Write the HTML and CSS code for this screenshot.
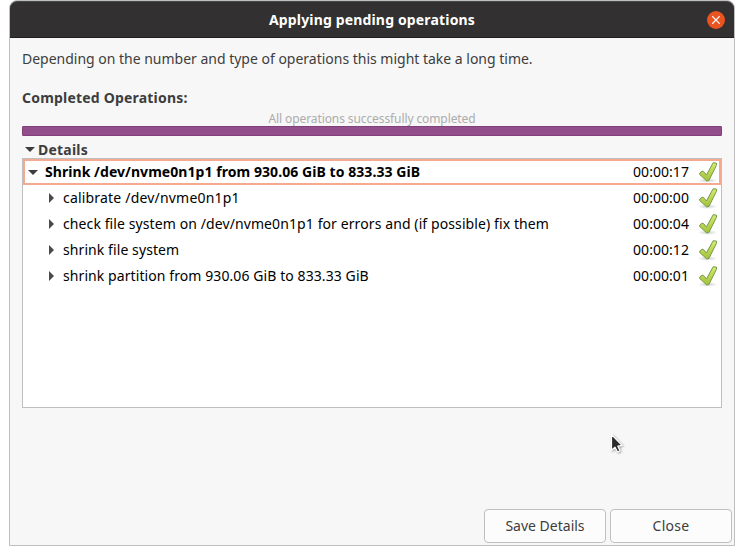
FILE: index.html
```html
<!DOCTYPE html>
<html lang="en">
<head>
<meta charset="utf-8">
<title>Applying pending operations</title>
<link rel="stylesheet" href="styles.css">
</head>
<body>
<svg class="defs" aria-hidden="true">
  <defs>
    <linearGradient id="green" x1="0" y1="0" x2="0" y2="1"><stop offset="0" stop-color="#d9ea70"/><stop offset="1" stop-color="#a3c038"/></linearGradient>
    <radialGradient id="shade"><stop offset="0" stop-color="#000" stop-opacity=".2"/><stop offset="1" stop-color="#000" stop-opacity="0"/></radialGradient>
    <symbol id="check" viewBox="0 0 22 22">
      <ellipse cx="9.5" cy="19.5" rx="10" ry="2.5" fill="url(#shade)"/>
      <path d="M15.2 1.7 L18.6 2.2 L18.4 4.4 L11 19.3 L8.8 20 L1.7 13.5 L1.8 12 L4 10.2 L5.4 10.4 L8.4 14 Z" fill="url(#green)" stroke="#6f9d4a" stroke-width="1" stroke-linejoin="round"/>
    </symbol>
  </defs>
</svg>
<main class="window">
  <header class="titlebar">
    <h1>Applying pending operations</h1>
    <button class="window-close" aria-label="Close window"><svg viewBox="0 0 18 18" width="18" height="18"><path d="M5.7 5.7l6.6 6.6M12.3 5.7l-6.6 6.6" stroke="#fff" stroke-width="1.2" stroke-linecap="square"/></svg></button>
  </header>
  <section class="content">
    <p class="note">Depending on the number and type of operations this might take a long time.</p>
    <h2 class="heading">Completed Operations:</h2>
    <p class="status">All operations successfully completed</p>
    <div class="progress"></div>
    <div class="details"><svg width="10" height="5"><path d="M0 0h10L5 5z"/></svg><span>Details</span></div>
    <div class="list">
      <div class="row selected"><svg class="down" width="10" height="5"><path d="M0 0h10L5 5z"/></svg><span class="name">Shrink /dev/nvme0n1p1 from 930.06 GiB to 833.33 GiB</span><time>00:00:17</time><svg class="check"><use href="#check"/></svg></div>
      <div class="row"><svg class="right" width="5" height="10"><path d="M0 0v10L5 5z"/></svg><span class="name calibrate">calibrate /dev/nvme0n1p1</span><time>00:00:00</time><svg class="check"><use href="#check"/></svg></div>
      <div class="row"><svg class="right" width="5" height="10"><path d="M0 0v10L5 5z"/></svg><span class="name verify">check file system on /dev/nvme0n1p1 for errors and (if possible) fix them</span><time>00:00:04</time><svg class="check"><use href="#check"/></svg></div>
      <div class="row"><svg class="right" width="5" height="10"><path d="M0 0v10L5 5z"/></svg><span class="name partition">shrink file system</span><time>00:00:12</time><svg class="check"><use href="#check"/></svg></div>
      <div class="row"><svg class="right" width="5" height="10"><path d="M0 0v10L5 5z"/></svg><span class="name partition">shrink partition from 930.06 GiB to 833.33 GiB</span><time>00:00:01</time><svg class="check"><use href="#check"/></svg></div>
    </div>
  </section>
  <footer class="actions"><button class="btn">Save Details</button><button class="btn close">Close</button></footer>
</main>
<svg class="pointer" width="16" height="24" viewBox="0 0 16 24"><path d="M1.5 1.5V17.3L5 14.2L7.6 19L10 17.8L7.8 13.2L12 12.4Z" fill="#2b2b2b" stroke="#fff" stroke-width="1.2" stroke-linejoin="round"/></svg>
</body>
</html>
```
FILE: styles.css
```css
* { box-sizing: border-box; margin: 0; }
body { height: 555px; overflow: hidden; background: #fff; color: #3d3d3d; font: 14px/20px "Noto Sans", sans-serif; }
button { padding: 0; border: 0; font: inherit; color: inherit; }
.defs { position: absolute; width: 0; height: 0; }

.window { display: flex; flex-direction: column; width: 726px; height: 546px; margin-left: 9px; border: 1px solid #bfbfbf; border-radius: 8px 8px 0 0; background: #f7f7f7; }
.titlebar { display: flex; align-items: center; justify-content: center; height: 37px; flex: none; padding-right: 9px; border-top: 1px solid #484a48; border-bottom: 1px solid #1f1e1e; border-radius: 7px 7px 0 0; background: #323030; color: #fff; }
.titlebar h1 { flex: 1; padding-left: 27px; text-align: center; font-size: 14px; font-weight: 700; line-height: 20px; letter-spacing: .159px; }
.window-close { display: flex; width: 18px; height: 18px; border-radius: 50%; background: #e95420; }

.content { display: flex; flex-direction: column; padding: 11px 12px 0; }
.note { letter-spacing: -.01px; }
.heading { margin-top: 19px; font-size: 14px; line-height: 20px; font-weight: 700; letter-spacing: .2px; }
.status { margin-top: 3px; height: 15px; text-align: center; font-size: 12px; line-height: 16px; letter-spacing: -.1px; color: #acacac; }
.progress { height: 10px; border: 1px solid #803f78; border-radius: 1px; background: #924d8b; }
.details { display: flex; align-items: center; gap: 3px; height: 22px; padding: 4px 0 0 3px; font-weight: 700; letter-spacing: .221px; }
.details span { padding-top: 2px; }
.details svg, .row svg { flex: none; fill: #3d3d3d; }

.list { height: 250px; border: 1px solid #bfbfbf; background: #fff; color: #000; }
.row { display: flex; align-items: center; height: 26px; padding: 0 1px 0 26px; }
.row .right { margin-right: 9px; fill: #4a4a4a; }
.name { flex: 1; white-space: nowrap; }
.calibrate { letter-spacing: .19px; }
.verify { letter-spacing: .098px; }
.partition { letter-spacing: .085px; }
.selected { padding: 0 0 0 3px; border: 2px solid #f4aa90; }
.selected .name { font-weight: 700; letter-spacing: .06px; }
.selected .down { margin-right: 7px; }
.selected .check { margin-right: -1px; }
time { width: 56px; margin-right: 9px; letter-spacing: .056px; }
.check { width: 22px; height: 22px; }

.actions { display: flex; justify-content: flex-end; gap: 4px; margin-top: auto; padding: 0 2px 2px; }
.btn { width: 122px; height: 34px; border: 1px solid #bfbfbf; border-radius: 4px; background: #fcfcfc; }
.close { letter-spacing: .29px; }
.pointer { position: absolute; left: 610px; top: 433px; filter: drop-shadow(1px 1px 1px #0005); }
```
